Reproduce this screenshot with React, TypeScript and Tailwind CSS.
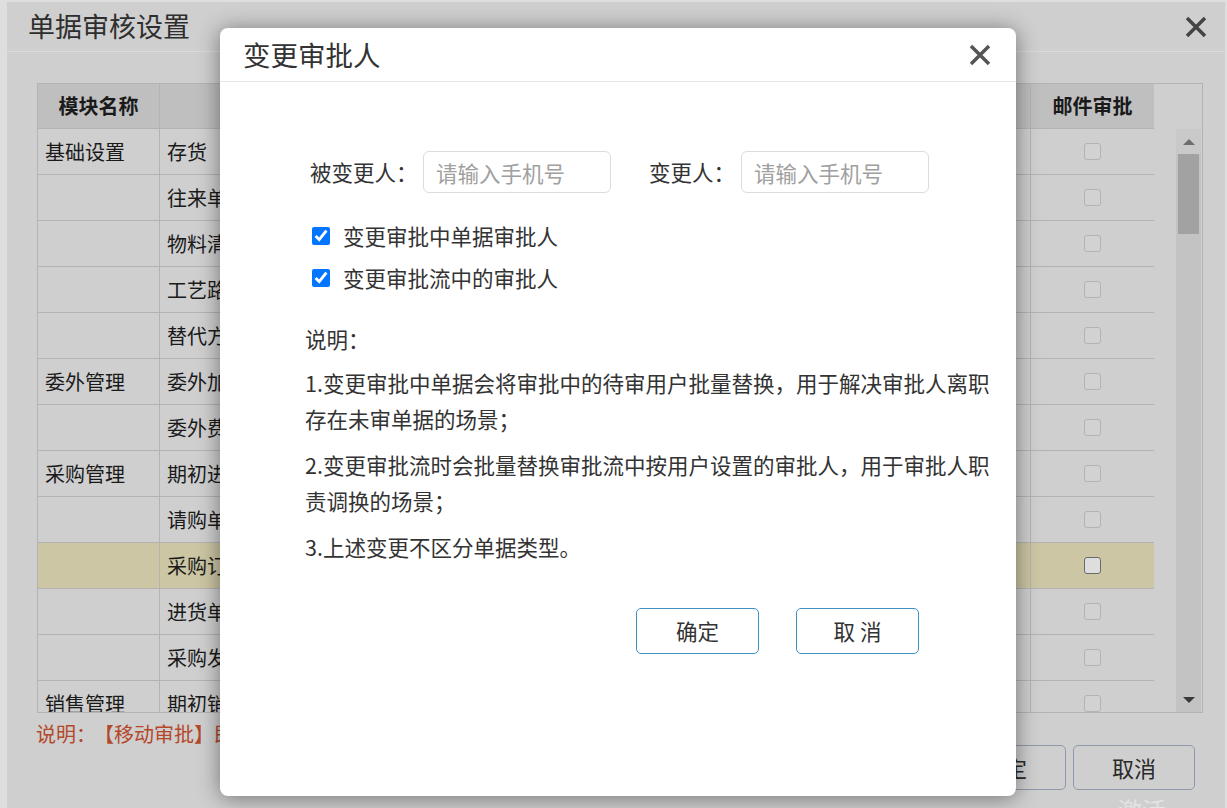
import React from "react";

const rows = [
  ["基础设置", "存货"],
  ["", "往来单位"],
  ["", "物料清单"],
  ["", "工艺路线"],
  ["", "替代方案"],
  ["委外管理", "委外加工单"],
  ["", "委外费用"],
  ["采购管理", "期初进货"],
  ["", "请购单"],
  ["", "采购订单"],
  ["", "进货单"],
  ["", "采购发票"],
  ["销售管理", "期初销售"],
];

function CloseIcon({ size, color, stroke }: { size: number; color: string; stroke: number }) {
  return (
    <svg width={size} height={size} viewBox="0 0 22 22">
      <path d="M2 2 L20 20 M20 2 L2 20" stroke={color} strokeWidth={stroke} fill="none" />
    </svg>
  );
}

export default function App() {
  return (
    <div className="relative w-[1227px] h-[808px] overflow-hidden bg-[#dedede] pt-[2px] pl-[7px] font-['Noto_Sans_CJK_SC',sans-serif]">
      {/* background window */}
      <div className="w-[1218px] h-[806px] bg-[#cfcfcf]">
        <div className="h-[50px] flex items-center justify-between pl-[21px] pr-[18px] border-b border-[#dcdcdc]">
          <span className="text-[27px] text-[#2e2e2e]">单据审核设置</span>
          <CloseIcon size={22} color="#444" stroke={3.5} />
        </div>

        <div className="ml-[30px] mt-[31px] w-[1166px] flex border border-[#b3b3b3]">
          <div className="w-[1116px]">
            <div className="flex h-[45px] bg-[#bfbfbf] border-b border-[#b3b3b3] text-[20px] font-bold text-[#1a1a1a]">
              <div className="w-[122px] border-r border-[#b3b3b3] flex items-center justify-center">模块名称</div>
              <div className="w-[871px] border-r border-[#b3b3b3] flex items-center justify-center">单据名称</div>
              <div className="w-[123px] flex items-center justify-center">邮件审批</div>
            </div>
            <div className="h-[583px] overflow-hidden">
              {rows.map((r, i) => (
                <div
                  key={i}
                  className={`flex h-[46px] border-b border-[#b3b3b3] text-[20px] text-[#1a1a1a] ${i === 9 ? "bg-[#ccc6a4]" : ""}`}
                >
                  <div className="w-[122px] border-r border-[#b3b3b3] flex items-center pl-[7px]">{r[0]}</div>
                  <div className="w-[871px] border-r border-[#b3b3b3] flex items-center pl-[7px]">{r[1]}</div>
                  <div className="w-[123px] flex items-center justify-center">
                    <div
                      className={`w-[17px] h-[17px] rounded-[3px] border ${i === 9 ? "border-[#6a6a6a] bg-[#dedede]" : "border-[#b3b3b3] bg-[#d2d2d2]"}`}
                    />
                  </div>
                </div>
              ))}
            </div>
          </div>
          <div className="w-[48px] flex flex-col">
            <div className="h-[45px]" />
            <div className="ml-[22px] w-[25px] flex-1 bg-[#c3c3c3] flex flex-col items-center">
              <div className="h-[25px] w-full bg-[#c9c9c9] flex items-center justify-center">
                <div className="w-0 h-0 border-l-[6px] border-r-[6px] border-b-[6px] border-l-transparent border-r-transparent border-b-[#6e6e6e]" />
              </div>
              <div className="w-[21px] h-[80px] bg-[#a2a2a2]" />
              <div className="flex-1" />
              <div className="h-[25px] flex items-center justify-center">
                <div className="w-0 h-0 border-l-[6px] border-r-[6px] border-t-[6px] border-l-transparent border-r-transparent border-t-[#3a3a3a]" />
              </div>
            </div>
          </div>
        </div>

        <div className="ml-[29px] mt-[10px] h-[22px] leading-[22px] text-[20px] text-[#b4482a]">
          说明：<span className="ml-[8px]">【移动审批】即开启后可在手机端进行单据审批</span>
        </div>
        <div className="flex justify-end gap-[7px] pr-[30px]">
          <button className="w-[122px] h-[45px] border border-[#8d9aab] rounded-[5px] text-[22px] text-[#2a2a2a]">确定</button>
          <button className="w-[122px] h-[45px] border border-[#8d9aab] rounded-[5px] text-[22px] text-[#2a2a2a]">取消</button>
        </div>
      </div>

      <div className="absolute left-[1118px] top-[792px] text-[24px] text-[#e4e4e4]">激活 Windows</div>

      {/* dialog */}
      <div className="absolute left-[220px] top-[28px] w-[796px] h-[768px] bg-white rounded-[8px] shadow-[0_2px_22px_rgba(0,0,0,0.45)] flex flex-col">
        <div className="h-[54px] flex items-center justify-between pl-[23px] pr-[25px] border-b border-[#e6e6e6]">
          <span className="text-[27.5px] text-[#333]">变更审批人</span>
          <CloseIcon size={22} color="#555" stroke={3.5} />
        </div>

        <div className="pt-[69px] text-[21.5px] text-[#333]">
          <div className="flex items-center pl-[90px]">
            <span className="w-[113px]">被变更人：</span>
            <input
              placeholder="请输入手机号"
              className="w-[188px] h-[42px] border border-[#dcdcdc] rounded-[6px] pl-[12px] text-[21.5px] placeholder:text-[#a0a0a0] outline-none"
            />
            <span className="w-[92px] ml-[38px]">变更人：</span>
            <input
              placeholder="请输入手机号"
              className="w-[188px] h-[42px] border border-[#dcdcdc] rounded-[6px] pl-[12px] text-[21.5px] placeholder:text-[#a0a0a0] outline-none"
            />
          </div>

          <div className="mt-[22px] pl-[92px]">
            <label className="h-[42px] flex items-center">
              <input type="checkbox" defaultChecked className="w-[18px] h-[18px] accent-[#0075ff]" />
              <span className="ml-[13px]">变更审批中单据审批人</span>
            </label>
            <label className="h-[42px] flex items-center">
              <input type="checkbox" defaultChecked className="w-[18px] h-[18px] accent-[#0075ff]" />
              <span className="ml-[13px]">变更审批流中的审批人</span>
            </label>
          </div>

          <div className="mt-[22px] pl-[85px] w-[785px] leading-[36px]">
            <p>说明：</p>
            <p className="mt-[8px]">1.变更审批中单据会将审批中的待审用户批量替换，用于解决审批人离职存在未审单据的场景；</p>
            <p className="mt-[10px]">2.变更审批流时会批量替换审批流中按用户设置的审批人，用于审批人职责调换的场景；</p>
            <p className="mt-[10px]">3.上述变更不区分单据类型。</p>
          </div>

          <div className="mt-[43px] flex justify-end gap-[37px] pr-[97px]">
            <button className="w-[123px] h-[46px] border border-[#3f93c4] rounded-[5px] text-[21.5px] text-[#333]">确定</button>
            <button className="w-[123px] h-[46px] border border-[#3f93c4] rounded-[5px] text-[21.5px] text-[#333]">取 消</button>
          </div>
        </div>
      </div>
    </div>
  );
}
